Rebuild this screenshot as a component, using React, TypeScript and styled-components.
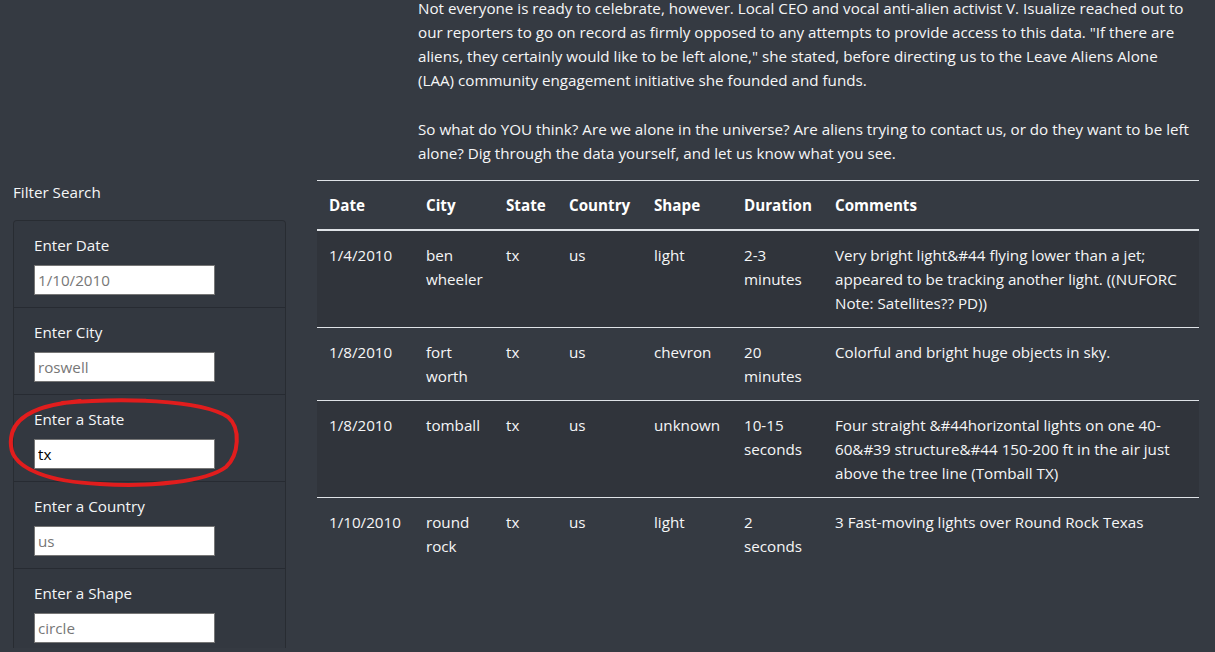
import React from "react";
import styled, { createGlobalStyle } from "styled-components";

const GlobalStyle = createGlobalStyle`
  html, body {
    margin: 0;
    padding: 0;
    background: #353a42;
    overflow: hidden;
  }
  body {
    font-family: "Open Sans", "Noto Sans", "Liberation Sans", sans-serif;
    font-size: 15.2px;
    line-height: 24px;
    color: #f5f6f7;
  }
`;

const Page = styled.div`
  width: 1215px;
  height: 652px;
  overflow: hidden;
  position: relative;
  margin-top: -4px;
`;

const Article = styled.div`
  padding-left: 418px;
  width: 772px;
`;

const Para = styled.p<{ $gap?: number }>`
  margin: 0 0 ${(p) => p.$gap ?? 15}px 0;
`;

const Row = styled.div`
  display: flex;
  align-items: flex-start;
  padding-left: 13px;
  gap: 31px;
`;

const Sidebar = styled.aside`
  width: 273px;
  flex: none;
`;

const SidebarTitle = styled.div`
  margin: 0 0 16px 0;
  line-height: 24px;
`;

const Card = styled.div`
  border: 1px solid rgba(0, 0, 0, 0.22);
  border-radius: 4px;
  background: rgba(0, 0, 0, 0.025);
`;

const Item = styled.div`
  padding: 12px 20px;
  border-top: 1px solid rgba(0, 0, 0, 0.22);
  &:first-child {
    border-top: none;
  }
`;

const Label = styled.label`
  display: block;
  line-height: 24px;
  margin-bottom: 8px;
`;

const Input = styled.input`
  box-sizing: border-box;
  display: block;
  width: 181px;
  height: 30px;
  margin: 0;
  padding: 1px 3px;
  border: 1px solid #767676;
  background: #fff;
  color: #000;
  font-family: inherit;
  font-size: 15.2px;
  &::placeholder {
    color: #777;
  }
`;

const Table = styled.table`
  width: 882px;
  flex: none;
  border-collapse: collapse;
  table-layout: fixed;
`;

const Th = styled.th<{ $w?: number }>`
  width: ${(p) => (p.$w ? `${p.$w}px` : "auto")};
  text-align: left;
  font-weight: 700;
  color: #fff;
  padding: 12px;
  vertical-align: bottom;
  border-top: 1px solid #dee2e6;
  border-bottom: 2px solid #dee2e6;
  box-sizing: border-box;
`;

const Tr = styled.tr<{ $striped?: boolean }>`
  background: ${(p) => (p.$striped ? "#30343b" : "transparent")};
`;

const Td = styled.td`
  padding: 12px;
  vertical-align: top;
  border-top: 1px solid #dee2e6;
`;

const Annotation = styled.svg`
  position: absolute;
  left: 0;
  top: 4px;
  pointer-events: none;
`;

const columns = [
  { name: "Date", w: 97 },
  { name: "City", w: 80 },
  { name: "State", w: 63 },
  { name: "Country", w: 85 },
  { name: "Shape", w: 90 },
  { name: "Duration", w: 91 },
  { name: "Comments", w: 376 },
];

const rows = [
  ["1/4/2010", "ben wheeler", "tx", "us", "light", "2-3 minutes", "Very bright light&#44 flying lower than a jet; appeared to be tracking another light. ((NUFORC Note: Satellites?? PD))"],
  ["1/8/2010", "fort worth", "tx", "us", "chevron", "20 minutes", "Colorful and bright huge objects in sky."],
  ["1/8/2010", "tomball", "tx", "us", "unknown", "10-15 seconds", "Four straight &#44horizontal lights on one 40-60&#39 structure&#44 150-200 ft in the air just above the tree line (Tomball TX)"],
  ["1/10/2010", "round rock", "tx", "us", "light", "2 seconds", "3 Fast-moving lights over Round Rock Texas"],
];

const filters = [
  { label: "Enter Date", placeholder: "1/10/2010" },
  { label: "Enter City", placeholder: "roswell" },
  { label: "Enter a State", placeholder: "", value: "tx" },
  { label: "Enter a Country", placeholder: "us" },
  { label: "Enter a Shape", placeholder: "circle" },
];

export default function App() {
  return (
    <>
      <GlobalStyle />
      <Page>
        <Article>
          <Para $gap={25}>
            Not everyone is ready to celebrate, however. Local CEO and vocal anti-alien activist V. Isualize reached out to
            our reporters to go on record as firmly opposed to any attempts to provide access to this data. "If there are
            aliens, they certainly would like to be left alone," she stated, before directing us to the Leave Aliens Alone
            (LAA) community engagement initiative she founded and funds.
          </Para>
          <Para>
            So what do YOU think? Are we alone in the universe? Are aliens trying to contact us, or do they want to be left
            alone? Dig through the data yourself, and let us know what you see.
          </Para>
        </Article>
        <Row>
          <Sidebar>
            <SidebarTitle>Filter Search</SidebarTitle>
            <Card>
              {filters.map((f) => (
                <Item key={f.label}>
                  <Label>{f.label}</Label>
                  <Input type="text" placeholder={f.placeholder} defaultValue={f.value} />
                </Item>
              ))}
            </Card>
          </Sidebar>
          <Table>
            <thead>
              <tr>
                {columns.map((c) => (
                  <Th key={c.name} $w={c.w}>
                    {c.name}
                  </Th>
                ))}
              </tr>
            </thead>
            <tbody>
              {rows.map((r, i) => (
                <Tr key={i} $striped={i % 2 === 0}>
                  {r.map((cell, j) => (
                    <Td key={j}>{cell}</Td>
                  ))}
                </Tr>
              ))}
            </tbody>
          </Table>
        </Row>
        <Annotation width="260" height="500" viewBox="0 0 260 500">
          <path
            d="M62 403 C 120 398, 200 399, 228 417 C 241 428, 239 455, 226 467 C 206 482, 150 487, 100 484 C 52 482, 13 470, 11 446 C 9 425, 24 409, 64 403 L 80 401"
            fill="none"
            stroke="#e11d1d"
            strokeWidth="4"
            strokeLinecap="round"
          />
        </Annotation>
      </Page>
    </>
  );
}
